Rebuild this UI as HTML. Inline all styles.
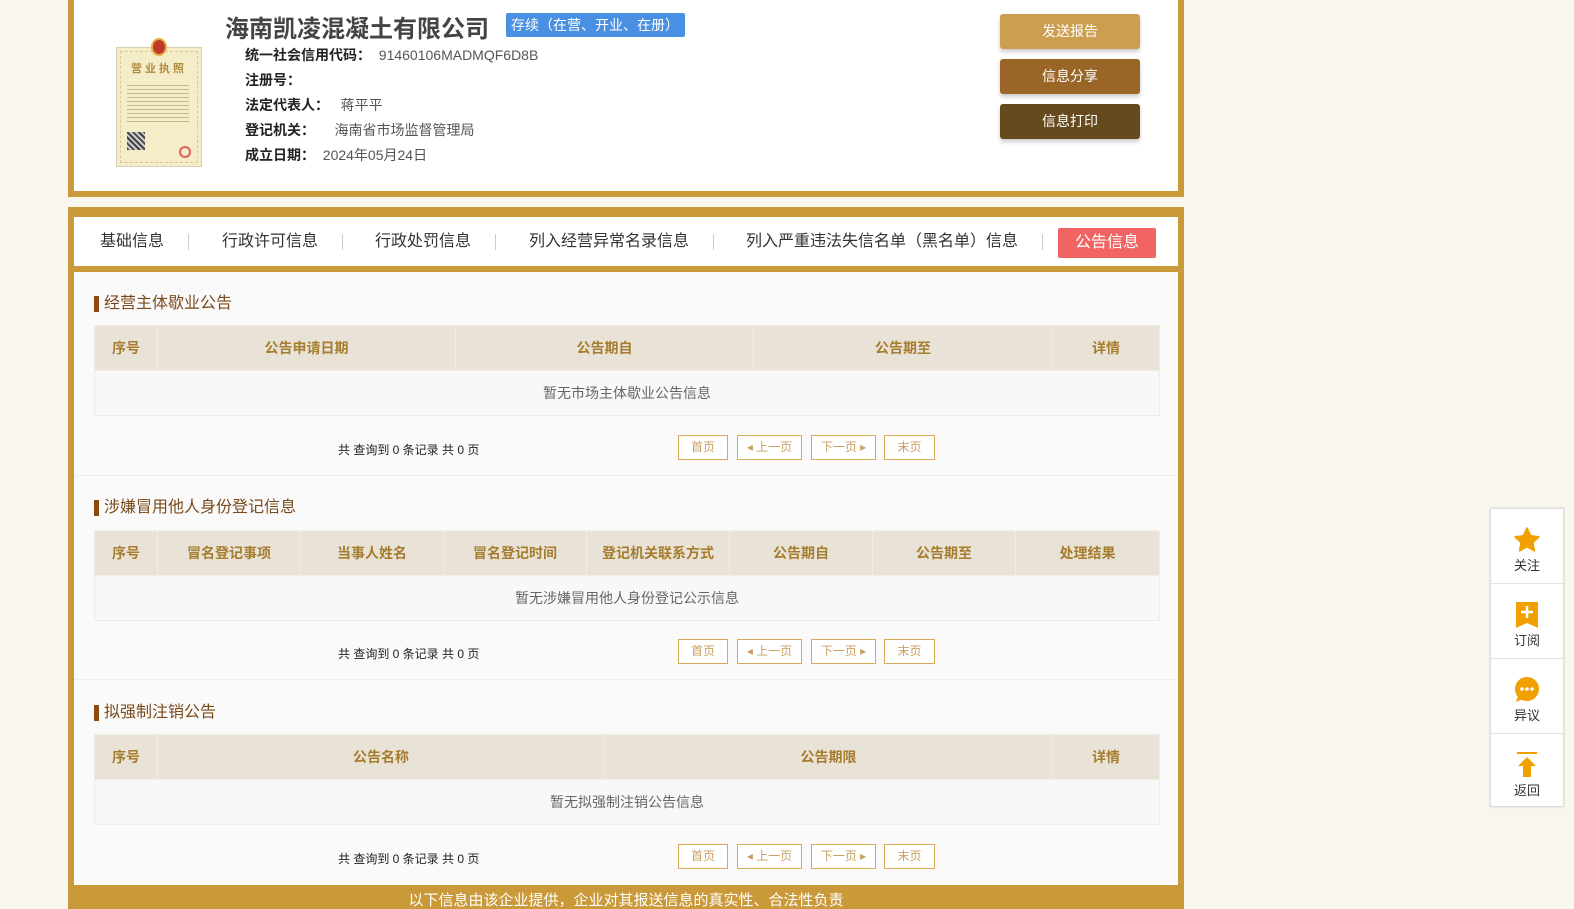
<!DOCTYPE html>
<html style="overflow:hidden;width:1574px;height:909px"><head><meta charset="utf-8">
<style>
*{margin:0;padding:0;box-sizing:border-box}
body{width:1574px;height:909px;overflow:hidden;background:#f9f6ee;font-family:"Liberation Sans","Noto Sans CJK SC",sans-serif;position:relative;color:#333}
.abs{position:absolute}
.card1{left:68px;top:-10px;width:1116px;height:207px;border:6px solid #c9993a;background:#fff}
.card2{left:68px;top:207px;width:1116px;height:702px;background:#c9993a;overflow:hidden}
.tabs{position:absolute;left:6px;top:10px;width:1104px;height:49px;background:#fff}
.content{position:absolute;left:6px;top:65px;width:1104px;height:613px;background:#fafafa}
.tab{position:absolute;top:0;height:49px;line-height:49px;font-size:16px;color:#333;white-space:nowrap}
.sep{position:absolute;top:17px;width:1px;height:16px;background:#ccc}
.btn{position:absolute;left:1000px;width:140px;height:35px;border-radius:3px;color:#fff;font-size:14px;text-align:center;line-height:35px;box-shadow:0 3px 4px rgba(0,0,0,.2)}
.info{position:absolute;left:245px;font-size:14px;color:#555;white-space:nowrap}
.info b{color:#222}
.stitle{position:absolute;left:94px;font-size:16px;color:#7a4a1a;border-left:5px solid #8a4a10;padding-left:5px;line-height:16px}
table{position:absolute;left:94px;width:1066px;border-collapse:collapse;font-size:14px}
th{background:#e9e2d6;color:#a67c2e;font-weight:bold;height:45px;border:1px solid #f2eee6;text-align:center}
td{height:45px;text-align:center;color:#666;border:1px solid #ececec;background:#f8f8f8}
.pinfo{position:absolute;left:338px;font-size:12px;color:#222}
.pb{position:absolute;height:25px;border:1px solid #d7aa58;color:#c9a060;font-size:12px;text-align:center;line-height:23px;background:#fff}
.hr{position:absolute;left:74px;width:1104px;height:1px;background:#eee}
.side{left:1490px;top:508px;width:74px;height:299px;background:#fff;border:1px solid #ddd;box-shadow:0 0 2px rgba(0,0,0,.15)}
.si{position:absolute;left:0;width:72px;height:75px;border-bottom:1px solid #e2e2e2;text-align:center;font-size:13px;color:#333}
.si svg{display:block;margin:18px auto 2px}
</style></head><body>
<div class="abs card1"></div>
<div class="abs" style="left:116px;top:47px;width:86px;height:120px;background:#f5ecc8;border:1px solid #d8cfb0">
 <div class="abs" style="left:3px;top:3px;width:78px;height:112px;border:1px dashed #d9c89a"></div>
 <div class="abs" style="left:34px;top:-10px;width:16px;height:18px;border-radius:50%;background:#c0392b;border:2px solid #e2b040"></div>
 <div class="abs" style="left:14px;top:12px;font-size:11px;color:#b08a40;letter-spacing:3px;font-weight:bold">营业执照</div>
 <div class="abs" style="left:10px;top:34px;width:62px;height:40px;background:repeating-linear-gradient(#f5ecc8 0 3px,#c9b790 3px 4px)"></div>
 <div class="abs" style="left:10px;top:84px;width:18px;height:18px;background:repeating-linear-gradient(45deg,#444 0 2px,#ccc 2px 4px)"></div>
 <div class="abs" style="left:62px;top:98px;width:12px;height:12px;border-radius:50%;border:2px solid #e06050"></div>
</div>
<div class="abs" style="left:225px;top:9px;font-size:24px;font-weight:bold;color:#444;white-space:nowrap">海南凯凌混凝土有限公司</div>
<div class="abs" style="left:506px;top:13px;width:179px;height:24px;background:#4a90e2;color:#fff;font-size:14px;line-height:24px;padding-left:5px;border-radius:2px;white-space:nowrap">存续（在营、开业、在册）</div>
<div class="info" style="top:45px"><b>统一社会信用代码：</b>&nbsp;&nbsp;91460106MADMQF6D8B</div>
<div class="info" style="top:70px"><b>注册号：</b></div>
<div class="info" style="top:95px"><b>法定代表人：</b>&nbsp;&nbsp;&nbsp;蒋平平</div>
<div class="info" style="top:120px"><b>登记机关：</b>&nbsp;&nbsp;&nbsp;&nbsp;&nbsp;海南省市场监督管理局</div>
<div class="info" style="top:145px"><b>成立日期：</b>&nbsp;&nbsp;2024年05月24日</div>
<div class="btn" style="top:14px;background:#cc9e50">发送报告</div>
<div class="btn" style="top:59px;background:#996627">信息分享</div>
<div class="btn" style="top:104px;background:#654a1e">信息打印</div>

<div class="abs card2">
 <div class="tabs">
  <div class="tab" style="left:26px">基础信息</div><div class="sep" style="left:114px"></div>
  <div class="tab" style="left:148px">行政许可信息</div><div class="sep" style="left:268px"></div>
  <div class="tab" style="left:301px">行政处罚信息</div><div class="sep" style="left:421px"></div>
  <div class="tab" style="left:455px">列入经营异常名录信息</div><div class="sep" style="left:639px"></div>
  <div class="tab" style="left:672px">列入严重违法失信名单（黑名单）信息</div><div class="sep" style="left:968px"></div>
  <div class="abs" style="left:984px;top:11px;width:98px;height:30px;background:#f26364;border-radius:2px;color:#fff;font-size:16px;text-align:center;line-height:30px">公告信息</div>
 </div>
 <div class="content"></div>
</div>

<div class="stitle" style="top:296px">经营主体歇业公告</div>
<table style="top:325px"><tr><th style="width:63px">序号</th><th style="width:298px">公告申请日期</th><th style="width:298px">公告期自</th><th style="width:299px">公告期至</th><th>详情</th></tr>
<tr><td colspan="5">暂无市场主体歇业公告信息</td></tr></table>
<div class="pinfo" style="top:441px">共 查询到 0 条记录 共 0 页</div>
<div class="pb" style="left:678px;top:435px;width:50px">首页</div>
<div class="pb" style="left:737px;top:435px;width:65px">◂ 上一页</div>
<div class="pb" style="left:811px;top:435px;width:65px">下一页 ▸</div>
<div class="pb" style="left:884px;top:435px;width:51px">末页</div>
<div class="hr" style="top:475px"></div>

<div class="stitle" style="top:500px">涉嫌冒用他人身份登记信息</div>
<table style="top:530px"><tr><th style="width:63px">序号</th><th style="width:143px">冒名登记事项</th><th style="width:143px">当事人姓名</th><th style="width:143px">冒名登记时间</th><th style="width:143px">登记机关联系方式</th><th style="width:143px">公告期自</th><th style="width:143px">公告期至</th><th>处理结果</th></tr>
<tr><td colspan="8">暂无涉嫌冒用他人身份登记公示信息</td></tr></table>
<div class="pinfo" style="top:645px">共 查询到 0 条记录 共 0 页</div>
<div class="pb" style="left:678px;top:639px;width:50px">首页</div>
<div class="pb" style="left:737px;top:639px;width:65px">◂ 上一页</div>
<div class="pb" style="left:811px;top:639px;width:65px">下一页 ▸</div>
<div class="pb" style="left:884px;top:639px;width:51px">末页</div>
<div class="hr" style="top:679px"></div>

<div class="stitle" style="top:705px">拟强制注销公告</div>
<table style="top:734px"><tr><th style="width:63px">序号</th><th style="width:447px">公告名称</th><th style="width:448px">公告期限</th><th>详情</th></tr>
<tr><td colspan="4">暂无拟强制注销公告信息</td></tr></table>
<div class="pinfo" style="top:850px">共 查询到 0 条记录 共 0 页</div>
<div class="pb" style="left:678px;top:844px;width:50px">首页</div>
<div class="pb" style="left:737px;top:844px;width:65px">◂ 上一页</div>
<div class="pb" style="left:811px;top:844px;width:65px">下一页 ▸</div>
<div class="pb" style="left:884px;top:844px;width:51px">末页</div>

<div class="abs" style="left:68px;top:885px;width:1116px;height:24px;background:#c9993a;color:#fff;font-size:15px;text-align:center;padding-top:7px;overflow:hidden;line-height:18px">以下信息由该企业提供，企业对其报送信息的真实性、合法性负责</div>

<div class="abs side">
 <div class="si" style="top:0"><svg width="28" height="26" viewBox="0 0 24 23"><path d="M12 1l3.2 6.8 7.3.9-5.4 5 1.4 7.3L12 17.4 5.5 21l1.4-7.3-5.4-5 7.3-.9z" fill="#f0a000" stroke="#f0a000" stroke-linejoin="round" stroke-width="1.5"/></svg>关注</div>
 <div class="si" style="top:75px"><svg width="22" height="26" viewBox="0 0 22 26"><path d="M0 0h22v26l-11-5-11 5z" fill="#f0a000"/><path d="M11 4v12M5 10h12" stroke="#fff" stroke-width="2.5"/></svg>订阅</div>
 <div class="si" style="top:150px"><svg width="26" height="26" viewBox="0 0 26 26"><circle cx="13" cy="12" r="12" fill="#f0a000"/><path d="M4 19l-2 6 7-3z" fill="#f0a000"/><circle cx="8" cy="12" r="1.8" fill="#fff"/><circle cx="13" cy="12" r="1.8" fill="#fff"/><circle cx="18" cy="12" r="1.8" fill="#fff"/></svg>异议</div>
 <div class="si" style="top:225px;border-bottom:none"><svg width="22" height="26" viewBox="0 0 22 26"><path d="M1 1h20" stroke="#f0a000" stroke-width="2"/><path d="M11 5l9 9h-5v11H7V14H2z" fill="#f0a000"/></svg>返回</div>
</div>
</body></html>
